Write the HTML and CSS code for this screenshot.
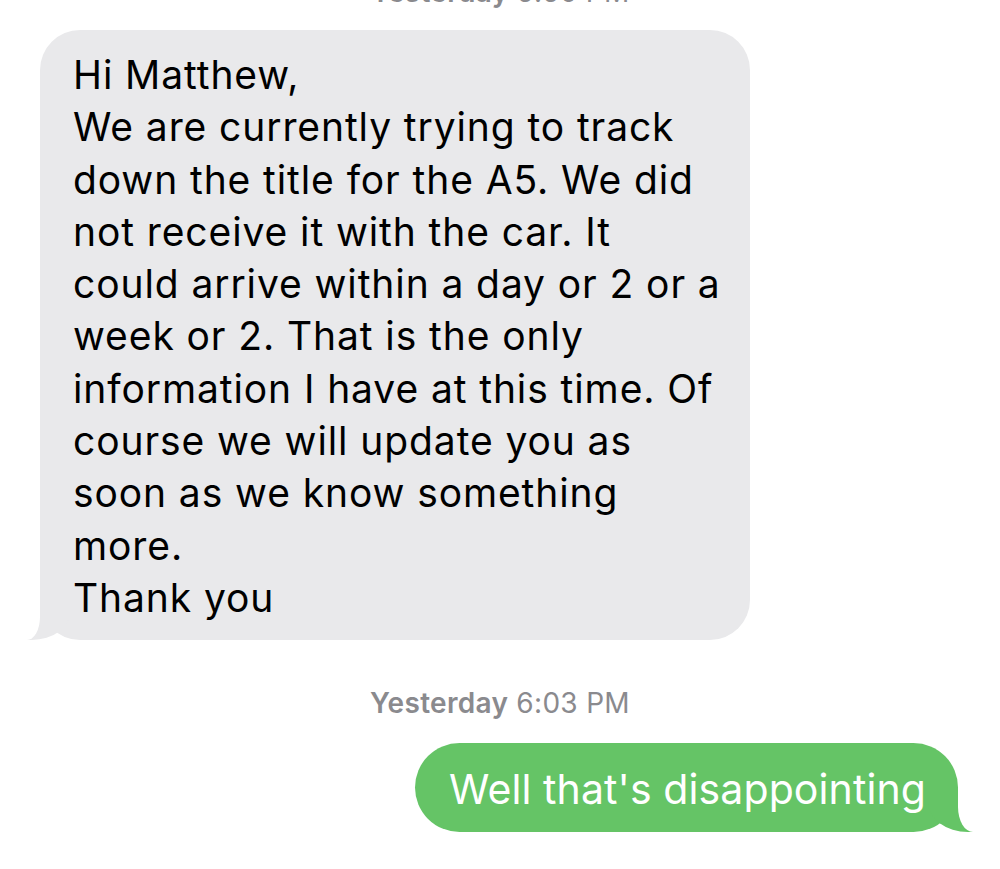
FILE: index.html
```html
<!DOCTYPE html>
<html>
<head>
<meta charset="utf-8">
<link rel="stylesheet" href="styles.css">
</head>
<body>
<div class="thread">
  <div class="stamp stamp-cut"><b>Yesterday</b> 5:50 PM</div>
  <div class="row row-in">
    <div class="bubble in">Hi Matthew,<br>We are currently trying to track<br>down the title for the A5. We did<br>not receive it with the car. It<br>could arrive within a day or 2 or a<br>week or 2. That is the only<br>information I have at this time. Of<br>course we will update you as<br>soon as we know something<br>more.<br>Thank you</div>
  </div>
  <div class="stamp"><b>Yesterday</b> 6:03 PM</div>
  <div class="row row-out">
    <div class="bubble out">Well that's disappointing</div>
  </div>
</div>
</body>
</html>
```
FILE: styles.css
```css
html, body {
  margin: 0;
  padding: 0;
  background: #ffffff;
}
body {
  width: 1000px;
  height: 869px;
  overflow: hidden;
  font-family: Inter, "Liberation Sans", Arial, sans-serif;
}
.thread {
  display: flex;
  flex-direction: column;
}
.stamp {
  text-align: center;
  color: #8a8a8e;
  font-size: 28px;
  line-height: 32px;
  letter-spacing: 0.3px;
}
.stamp b {
  font-weight: 600;
}
.stamp-cut {
  margin-top: -24px;
  height: 32px;
  margin-bottom: 22px;
}
.row {
  display: flex;
}
.row-in {
  justify-content: flex-start;
  padding-left: 40px;
}
.row-out {
  justify-content: flex-end;
  padding-right: 42px;
}
.bubble {
  position: relative;
  box-sizing: border-box;
}
.in {
  width: 710px;
  background: #e9e9eb;
  color: #000;
  border-radius: 40px;
  font-size: 39px;
  letter-spacing: 0.9px;
  line-height: 52.3px;
  padding: 19px 10px 16px 33px;
  white-space: nowrap;
}
.in::before {
  content: "";
  position: absolute;
  bottom: 0;
  left: -13px;
  height: 40px;
  border-left: 43px solid #e9e9eb;
  border-bottom-right-radius: 38px 28px;
}
.in::after {
  content: "";
  position: absolute;
  bottom: 0;
  left: -50px;
  width: 50px;
  height: 40px;
  background: #fff;
  border-bottom-right-radius: 13px 23px;
}
.row-in + .stamp {
  margin-top: 47px;
}
.stamp + .row-out {
  margin-top: 24px;
}
.out {
  background: #65c466;
  color: #fff;
  border-radius: 45px;
  font-size: 41px;
  letter-spacing: 0.1px;
  line-height: 48px;
  padding: 22px 32px 19px 34px;
  white-space: nowrap;
}
.out::before {
  content: "";
  position: absolute;
  bottom: 0;
  right: -15px;
  height: 45px;
  border-right: 45px solid #65c466;
  border-bottom-left-radius: 40px 30px;
}
.out::after {
  content: "";
  position: absolute;
  bottom: 0;
  right: -50px;
  width: 50px;
  height: 45px;
  background: #fff;
  border-bottom-left-radius: 15px 25px;
}
```
